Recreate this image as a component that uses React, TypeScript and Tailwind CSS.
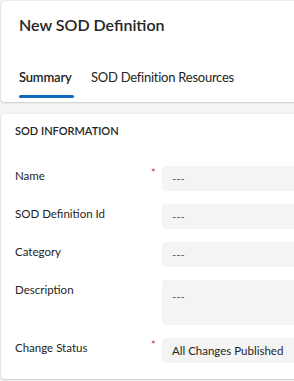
import React from "react";

interface Field {
  label: string;
  value: string;
  required?: boolean;
  tall?: boolean;
}

const fields: Field[] = [
  { label: "Name", value: "---", required: true },
  { label: "SOD Definition Id", value: "---" },
  { label: "Category", value: "---" },
  { label: "Description", value: "---", tall: true },
  { label: "Change Status", value: "All Changes Published", required: true },
];

const App: React.FC = () => {
  return (
    <div
      className="w-[294px] h-[381px] overflow-hidden bg-[#f5f5f5] pt-[1px] pl-[1px] text-[#242424]"
      style={{ fontFamily: 'Lato, "Open Sans", sans-serif' }}
    >
      <div className="w-[320px] h-[101px] bg-white rounded-[4px] shadow-[0_1px_2px_rgba(0,0,0,0.14),0_0_2px_rgba(0,0,0,0.12)] pl-[18px] pt-[13px]">
        <h1 className="text-[16px] leading-[22px] font-semibold">New SOD Definition</h1>
        <div className="flex gap-[17px] mt-[31px] text-[13px] leading-[20px]">
          <div className="flex flex-col w-[55px]">
            <span className="font-semibold tracking-[-0.2px]">Summary</span>
            <span className="mt-[8px] h-[3px] rounded-full bg-[#0f6cbd]" />
          </div>
          <span className="tracking-[-0.25px]">SOD Definition Resources</span>
        </div>
      </div>

      <div className="mt-[12px] w-[320px] h-[265px] bg-white rounded-[4px] shadow-[0_1px_2px_rgba(0,0,0,0.14),0_0_2px_rgba(0,0,0,0.12)] pl-[14px] pt-[9px]">
        <h2 className="text-[11px] leading-[16px] font-semibold uppercase">SOD Information</h2>
        <div className="mt-[27px] flex flex-col gap-[13px]">
          {fields.map((f) => (
            <div key={f.label} className="flex items-start">
              <span className="w-[136px] pt-[1px] text-[11.5px] leading-[18px]">{f.label}</span>
              <span className="w-[11px] text-[#c4314b] text-[11px] leading-[14px]">
                {f.required ? "*" : ""}
              </span>
              <div
                className={`flex-1 bg-[#f4f4f4] rounded-[4px] px-[10px] text-[11.5px] ${
                  f.tall ? "h-[45px] pt-[8px]" : "h-[25px] flex items-center"
                }`}
              >
                <span className={f.value === "---" ? "text-[#616161]" : "text-[#242424]"}>{f.value}</span>
              </div>
            </div>
          ))}
        </div>
      </div>
    </div>
  );
};

export default App;
